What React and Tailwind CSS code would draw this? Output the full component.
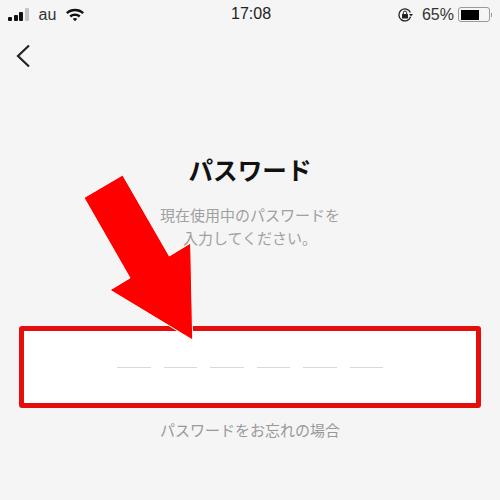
const font = { fontFamily: '"Noto Sans CJK JP", sans-serif' };

function StatusBar() {
  return (
    <div className="relative flex h-[28px] items-center justify-between pl-[8px] pr-[8px] pt-[1px] text-[16px] text-[#222] font-['Liberation_Sans',sans-serif]">
      <div className="flex items-center">
        <div className="flex items-end gap-[1.5px]">
          <span className="h-[4px] w-[4px] rounded-[1px] bg-[#111]" />
          <span className="h-[6px] w-[4px] rounded-[1px] bg-[#111]" />
          <span className="h-[9px] w-[4px] rounded-[1px] bg-[#111]" />
          <span className="h-[13px] w-[4px] rounded-[1px] bg-[#c4c4c4]" />
        </div>
        <span className="ml-[10px] text-[#333]">au</span>
        <svg className="ml-[9px]" width="20" height="15" viewBox="0 0 20 15">
          <path d="M1 5.2C6 .6 14 .6 19 5.2l-1.7 1.9C13.2 3.4 6.8 3.4 2.7 7.1z" fill="#111" />
          <path d="M4.4 8.6c3.2-2.9 8-2.9 11.2 0l-1.7 1.8c-2.3-1.9-5.5-1.9-7.8 0z" fill="#111" />
          <path d="M7.7 11.8c1.4-1.1 3.2-1.1 4.6 0L10 14.3z" fill="#111" />
        </svg>
      </div>
      <span className="absolute left-[231px] top-[5px] text-[16px] leading-[18px] text-[#222]">17:08</span>
      <div className="flex items-center">
        <svg width="16" height="16" viewBox="0 0 16 16" fill="none">
          <path d="M13.6 9.8A6 6 0 1 1 13.4 5.5" stroke="#222" strokeWidth="1.3" />
          <path d="M12 7h4l-2 2.4z" fill="#222" />
          <rect x="5" y="7" width="6" height="4.6" rx=".6" fill="#222" />
          <path d="M6.3 7V5.8a1.7 1.7 0 0 1 3.4 0V7" stroke="#222" strokeWidth="1" />
        </svg>
        <span className="ml-[9px] text-[#333]">65%</span>
        <div className="ml-[4px] flex items-center">
          <div className="h-[15px] w-[32px] rounded-[3px] border border-[#999] p-[1.5px]">
            <div className="h-full w-[18px] bg-black" />
          </div>
          <span className="ml-[1px] h-[4px] w-[1px] bg-[#999]" />
        </div>
      </div>
    </div>
  );
}

export default function App() {
  return (
    <div className="relative h-[500px] w-[500px] overflow-hidden bg-[#f5f5f5]" style={font}>
      <StatusBar />

      <button className="ml-[16px] mt-[16px] block h-[24px] w-[16px]">
        <svg width="15" height="24" viewBox="0 0 15 24" fill="none">
          <path d="M13 1.5 2 12l11 10.5" stroke="#222" strokeWidth="2.2" />
        </svg>
      </button>

      <h1 className="mt-[84px] text-center text-[24.6px] font-bold leading-[34px] text-[#111]">パスワード</h1>
      <p className="mt-[17px] text-center text-[15px] leading-[23px] text-[#a0a0a0]">
        現在使用中のパスワードを
        <br />
        入力してください。
      </p>

      {/* Input box with red highlight */}
      <div className="ml-[19px] mt-[77px] flex h-[82px] w-[462px] items-center justify-center gap-[13px] rounded-[3px] border-[5px] border-[#e60d0d] bg-white">
        <span className="h-[1px] w-[33.5px] bg-[#d9d9d9]" />
        <span className="h-[1px] w-[33.5px] bg-[#d9d9d9]" />
        <span className="h-[1px] w-[33.5px] bg-[#d9d9d9]" />
        <span className="h-[1px] w-[33.5px] bg-[#d9d9d9]" />
        <span className="h-[1px] w-[33.5px] bg-[#d9d9d9]" />
        <span className="h-[1px] w-[33.5px] bg-[#d9d9d9]" />
      </div>

      <p className="mt-[12px] text-center text-[15px] leading-[20px] text-[#999]">パスワードをお忘れの場合</p>

      {/* Annotation arrow */}
      <svg className="absolute left-0 top-0" width="500" height="500" viewBox="0 0 500 500">
        <polygon
          points="122.7,175 84,197.7 130,278 110,290 192.7,340 190.7,243 169.3,256"
          fill="#ff0000"
          stroke="#ffffff"
          strokeWidth="1"
        />
      </svg>
    </div>
  );
}
